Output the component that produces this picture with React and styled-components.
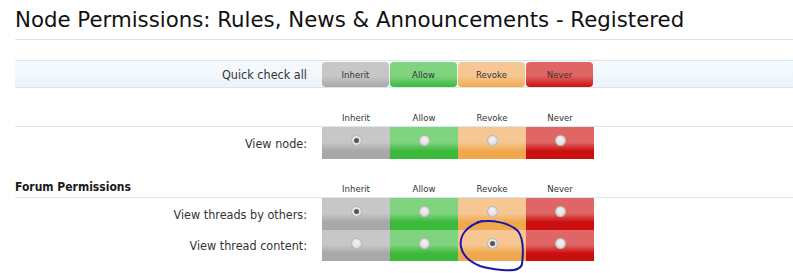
import React from 'react';
import styled, { createGlobalStyle } from 'styled-components';

const BODY_FONT = '"DejaVu Sans Condensed", "DejaVu Sans", sans-serif';
const LINE = '#d6e7f1';

const COLORS = {
  inherit: ['#c7c7c7', '#a8a8a8'],
  allow: ['#80d480', '#3bb93b'],
  revoke: ['#f6c792', '#f0a84f'],
  never: ['#e06565', '#cb0f0f'],
};

const OPTIONS = [
  { key: 'inherit', label: 'Inherit' },
  { key: 'allow', label: 'Allow' },
  { key: 'revoke', label: 'Revoke' },
  { key: 'never', label: 'Never' },
];

const GlobalStyle = createGlobalStyle`
  body {
    margin: 0;
    background: #fff;
    font-family: ${BODY_FONT};
    color: #222;
  }
`;

const Page = styled.div`
  width: 793px;
  height: 273px;
  overflow: hidden;
`;

const Title = styled.h1`
  margin: 0 0 0 15px;
  height: 40px;
  box-sizing: border-box;
  padding-top: 6px;
  font-family: "DejaVu Sans", sans-serif;
  font-size: 21.3px;
  font-weight: normal;
  color: #111;
  line-height: 27px;
  border-bottom: 1px solid ${LINE};
  white-space: nowrap;
`;

const QuickBar = styled.div`
  margin: 20px 0 0 15px;
  height: 26px;
  display: flex;
  align-items: center;
  background: linear-gradient(to bottom, #f6fafd, #ecf4fa);
  border-top: 1px solid ${LINE};
  border-bottom: 1px solid ${LINE};
`;

const Label = styled.div`
  width: 307px;
  flex: none;
  box-sizing: border-box;
  padding-right: 15px;
  text-align: ${(p) => (p.$heading ? 'left' : 'right')};
  font-size: ${(p) => (p.$heading ? '12px' : '12.5px')};
  font-weight: ${(p) => (p.$heading ? 'bold' : 'normal')};
  color: ${(p) => (p.$heading ? '#1a1a1a' : '#333')};
  white-space: nowrap;
`;

const QuickButtons = styled.div`
  display: flex;
  gap: 1px;
`;

const QuickButton = styled.button`
  width: 67px;
  height: 25px;
  border: none;
  border-radius: 4px;
  padding: 0;
  font-family: ${BODY_FONT};
  font-size: 9.5px;
  color: #333;
  background: linear-gradient(
    to bottom,
    ${(p) => COLORS[p.$kind][0]} 0%,
    ${(p) => COLORS[p.$kind][0]} 55%,
    ${(p) => COLORS[p.$kind][1]} 100%
  );
`;

const HeaderRow = styled.div`
  margin-left: 15px;
  display: flex;
  align-items: flex-end;
  padding-bottom: 3px;
  box-sizing: border-box;
  border-bottom: 1px solid ${LINE};
  height: ${(p) => p.$height}px;
`;

const ColumnHead = styled.div`
  width: 68px;
  flex: none;
  text-align: center;
  font-size: 9.5px;
  color: #333;
`;

const PermRow = styled.div`
  margin-left: 15px;
  height: ${(p) => p.$height}px;
  display: flex;
  align-items: center;
`;

const Cells = styled.div`
  display: flex;
  align-self: stretch;
`;

const Cell = styled.div`
  position: relative;
  width: 68px;
  display: flex;
  justify-content: center;
  padding-top: 8px;
  box-sizing: border-box;
  background: linear-gradient(
    to bottom,
    ${(p) => COLORS[p.$kind][0]} 0%,
    ${(p) => COLORS[p.$kind][0]} 48%,
    ${(p) => COLORS[p.$kind][1]} 75%,
    ${(p) => COLORS[p.$kind][1]} 100%
  );
`;

const Radio = styled.span`
  width: 11px;
  height: 11px;
  border-radius: 50%;
  box-sizing: border-box;
  border: 1px solid rgba(120, 120, 120, 0.35);
  background: radial-gradient(circle at 50% 40%, #f4f4f4 0%, #dedede 70%, #cfcfcf 100%);
  display: flex;
  align-items: center;
  justify-content: center;
  &::after {
    content: '';
    width: 5px;
    height: 5px;
    border-radius: 50%;
    background: #555;
    display: ${(p) => (p.$checked ? 'block' : 'none')};
  }
`;

const Scribble = styled.svg`
  position: absolute;
  left: 0;
  top: 0;
  overflow: visible;
  pointer-events: none;
`;

function Row({ label, value, height, marked }) {
  return (
    <PermRow $height={height}>
      <Label>{label}</Label>
      <Cells>
        {OPTIONS.map((o) => (
          <Cell key={o.key} $kind={o.key}>
            <Radio $checked={value === o.key} />
            {marked === o.key && (
              <Scribble width="68" height="32" viewBox="0 0 68 32">
                <path
                  d="M20,-8 C34,-11 52,-7 60,1 C66,9 65,26 64,34 C63,40 55,41 44,40 C34,39 28,38 22,36 C12,32 5,27 3,17 C1,6 8,-4 24,-9"
                  fill="none"
                  stroke="#1c16a6"
                  strokeWidth="2"
                  strokeLinecap="round"
                />
              </Scribble>
            )}
          </Cell>
        ))}
      </Cells>
    </PermRow>
  );
}

function Heads({ heading, height }) {
  return (
    <HeaderRow $height={height}>
      <Label $heading={!!heading}>{heading}</Label>
      {OPTIONS.map((o) => (
        <ColumnHead key={o.key}>{o.label}</ColumnHead>
      ))}
    </HeaderRow>
  );
}

export default function App() {
  return (
    <Page>
      <GlobalStyle />
      <Title>Node Permissions: Rules, News &amp; Announcements - Registered</Title>
      <QuickBar>
        <Label>Quick check all</Label>
        <QuickButtons>
          {OPTIONS.map((o) => (
            <QuickButton key={o.key} $kind={o.key}>{o.label}</QuickButton>
          ))}
        </QuickButtons>
      </QuickBar>
      <Heads height={39} />
      <Row label="View node:" value="inherit" height={32} />
      <Heads heading="Forum Permissions" height={39} />
      <Row label="View threads by others:" value="inherit" height={32} />
      <Row label="View thread content:" value="revoke" height={31} marked="revoke" />
    </Page>
  );
}
